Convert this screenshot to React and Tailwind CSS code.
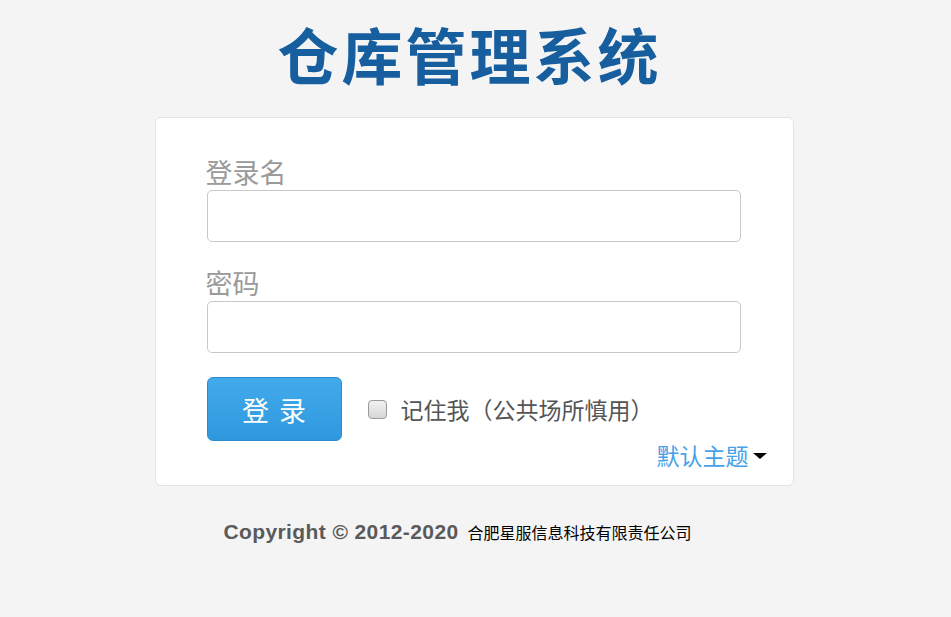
export default function App() {
  return (
    <div className="min-h-[617px] w-full bg-[#f4f4f4] flex flex-col items-center" style={{ fontFamily: '"Noto Sans CJK SC", "Liberation Sans", sans-serif' }}>
      <h1 className="mt-[24px] text-[61px] leading-[60px] font-bold text-[#175e9f] tracking-[3px] pr-[12px]">仓库管理系统</h1>
      <div className="mt-[33px] w-[639px] bg-white border border-[#e3e3e3] rounded-[6px] pl-[51px] pr-[52px] pt-[41px] pb-[18px] ml-[-3px]">
        <label className="block text-[27px] leading-[26px] text-[#9a9a9a] ml-[-1px]">登录名</label>
        <input className="mt-[5px] block w-full h-[52px] border border-[#c8c8c8] rounded-[5px] bg-white outline-none" />
        <label className="block mt-[28px] text-[27px] leading-[26px] text-[#9a9a9a] ml-[-1px]">密码</label>
        <input type="password" className="mt-[5px] block w-full h-[52px] border border-[#c8c8c8] rounded-[5px] bg-white outline-none" />
        <div className="mt-[24px] flex items-center">
          <button className="w-[135px] h-[64px] rounded-[6px] border border-[#2a8ccf] bg-gradient-to-b from-[#42abec] to-[#2f97dd] text-white text-[27px] leading-[27px] tracking-[10px] pl-[10px]">登录</button>
          <span className="ml-[26px] w-[19px] h-[19px] rounded-[4px] border border-[#9a9a9a] bg-gradient-to-b from-[#f2f2f2] to-[#d6d6d6] inline-block"></span>
          <span className="ml-[14px] text-[23px] leading-[23px] text-[#555555]">记住我（公共场所慎用）</span>
        </div>
        <div className="mt-[2px] mr-[-26px] flex justify-end items-center">
          <span className="text-[23px] leading-[24px] text-[#45a2ea]">默认主题</span>
          <span className="ml-[4px] mt-[2px] w-0 h-0 border-l-[7px] border-r-[7px] border-t-[6px] border-l-transparent border-r-transparent border-t-black"></span>
        </div>
      </div>
      <div className="mt-[30px] flex items-baseline pr-[36px]">
        <span className="text-[21px] font-bold text-[#5a5a5a] tracking-[0.4px]" style={{ fontFamily: '"Liberation Sans", sans-serif' }}>Copyright © 2012-2020</span>
        <span className="ml-[9px] text-[16px] text-black">合肥星服信息科技有限责任公司</span>
      </div>
    </div>
  );
}
